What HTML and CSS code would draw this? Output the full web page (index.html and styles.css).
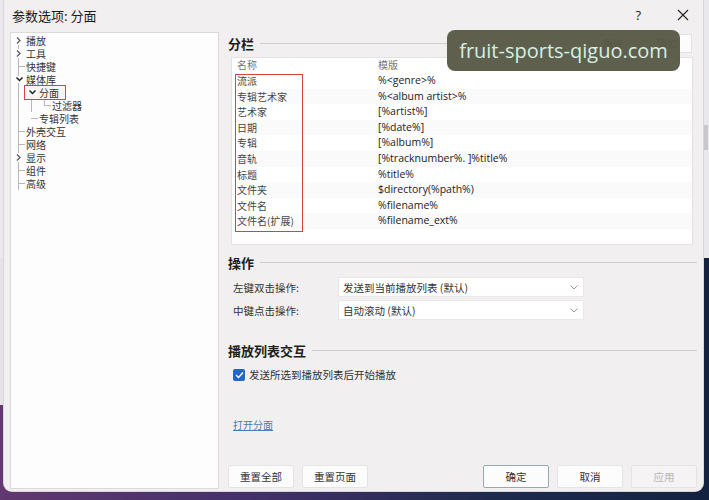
FILE: index.html
```html
<!DOCTYPE html>
<html lang="zh-CN">
<head>
  <meta charset="UTF-8" />
  <title>参数选项: 分面</title>
  <link rel="stylesheet" href="styles.css">
</head>
<body>
  <div class="window">
    <div class="titlebar">
      <span class="title">参数选项: 分面</span>
      <span class="help">?</span>
      <span class="close">
        <svg width="12" height="12" viewBox="0 0 12 12"><path d="M1 1 L11 11 M11 1 L1 11" stroke="#222" stroke-width="1.1" fill="none"/></svg>
      </span>
    </div>

    <div class="main">
      <!-- page tree -->
      <div class="tree-panel">
        <ul class="tree">
          <li><div class="item"><span class="twist"><svg class="arr" width="7" height="9" viewBox="0 0 7 9"><path d="M2 1.5 L5 4.5 L2 7.5" stroke="#555" stroke-width="1.2" fill="none"/></svg></span><span class="label">播放</span></div></li>
          <li><div class="item"><span class="twist"><svg class="arr" width="7" height="9" viewBox="0 0 7 9"><path d="M2 1.5 L5 4.5 L2 7.5" stroke="#555" stroke-width="1.2" fill="none"/></svg></span><span class="label">工具</span></div></li>
          <li><div class="item"><span class="twist leaf"></span><span class="label">快捷键</span></div></li>
          <li>
            <div class="item"><span class="twist"><svg class="arr" width="9" height="7" viewBox="0 0 9 7"><path d="M1.5 1.5 L4.5 4.5 L7.5 1.5" stroke="#222" stroke-width="1.5" fill="none"/></svg></span><span class="label">媒体库</span></div>
            <ul class="sub">
              <li>
                <div class="item"><span class="sel"><span class="twist"><svg class="arr" width="9" height="7" viewBox="0 0 9 7"><path d="M1.5 1.5 L4.5 4.5 L7.5 1.5" stroke="#222" stroke-width="1.5" fill="none"/></svg></span><span class="label">分面</span></span></div>
                <ul class="sub leafy">
                  <li><div class="item"><span class="twist leaf"></span><span class="label">过滤器</span></div></li>
                </ul>
              </li>
              <li><div class="item"><span class="twist leaf"></span><span class="label">专辑列表</span></div></li>
            </ul>
          </li>
          <li><div class="item"><span class="twist leaf"></span><span class="label">外壳交互</span></div></li>
          <li><div class="item"><span class="twist leaf"></span><span class="label">网络</span></div></li>
          <li><div class="item"><span class="twist"><svg class="arr" width="7" height="9" viewBox="0 0 7 9"><path d="M2 1.5 L5 4.5 L2 7.5" stroke="#555" stroke-width="1.2" fill="none"/></svg></span><span class="label">显示</span></div></li>
          <li><div class="item"><span class="twist leaf"></span><span class="label">组件</span></div></li>
          <li><div class="item"><span class="twist leaf"></span><span class="label">高级</span></div></li>
        </ul>
      </div>

      <div class="pane">
        <div class="group-head">
          <h2>分栏</h2>
          <span class="rule"></span>
          <button class="small-btn">删除</button>
          <button class="small-btn">添加</button>
        </div>

        <div class="columns">
          <div class="col-head"><span>名称</span><span>模版</span></div>
          <div class="col-row"><span>流派</span><span class="tpl">%&lt;genre&gt;%</span></div>
          <div class="col-row"><span>专辑艺术家</span><span class="tpl">%&lt;album artist&gt;%</span></div>
          <div class="col-row"><span>艺术家</span><span class="tpl">[%artist%]</span></div>
          <div class="col-row"><span>日期</span><span class="tpl">[%date%]</span></div>
          <div class="col-row"><span>专辑</span><span class="tpl">[%album%]</span></div>
          <div class="col-row"><span>音轨</span><span class="tpl">[%tracknumber%. ]%title%</span></div>
          <div class="col-row"><span>标题</span><span class="tpl">%title%</span></div>
          <div class="col-row"><span>文件夹</span><span class="tpl">$directory(%path%)</span></div>
          <div class="col-row"><span>文件名</span><span class="tpl">%filename%</span></div>
          <div class="col-row"><span>文件名(扩展)</span><span class="tpl">%filename_ext%</span></div>
          <div class="mark"></div>
        </div>

        <div class="group-head head-ops">
          <h2>操作</h2>
          <span class="rule"></span>
        </div>
        <div class="form-row first">
          <label>左键双击操作:</label>
          <div class="select"><span>发送到当前播放列表 (默认)</span><svg width="8" height="5" viewBox="0 0 8 5"><path d="M0.5 0.5 L4 4 L7.5 0.5" stroke="#999" stroke-width="1" fill="none"/></svg></div>
        </div>
        <div class="form-row">
          <label>中键点击操作:</label>
          <div class="select"><span>自动滚动 (默认)</span><svg width="8" height="5" viewBox="0 0 8 5"><path d="M0.5 0.5 L4 4 L7.5 0.5" stroke="#999" stroke-width="1" fill="none"/></svg></div>
        </div>

        <div class="group-head head-list">
          <h2>播放列表交互</h2>
          <span class="rule"></span>
        </div>
        <div class="check-row">
          <span class="checkbox"><svg width="9" height="8" viewBox="0 0 9 8"><path d="M1 4 L3.5 6.5 L8 1.5" stroke="#fff" stroke-width="1.4" fill="none"/></svg></span>
          <span>发送所选到播放列表后开始播放</span>
        </div>

        <a class="link" href="#">打开分面</a>

        <div class="footer">
          <button class="btn">重置全部</button>
          <button class="btn">重置页面</button>
          <span class="spacer"></span>
          <button class="btn default">确定</button>
          <button class="btn">取消</button>
          <button class="btn disabled">应用</button>
        </div>
      </div>
    </div>
  </div>

  <div class="watermark">fruit-sports-qiguo.com</div>
</body>
</html>
```

FILE: styles.css
```css
body {
  margin: 0;
  width: 709px;
  height: 500px;
  overflow: hidden;
  position: relative;
  font-family: "Noto Sans CJK SC", sans-serif;
  color: #222;
  background:
    linear-gradient(#c9c7cb, #c9c7cb) 704px 125px / 4px 25px no-repeat,
    linear-gradient(#e9e8ec, #e9e8ec) 0 0 / 709px 258px no-repeat,
    linear-gradient(#e4e2e6, #e4e2e6) 0 0 / 5px 405px no-repeat,
    linear-gradient(90deg, #61386f 0%, #44306a 35%, #1d2a4c 70%, #142242 100%);
}

.window {
  margin-left: 4px;
  width: 699px;
  height: 491px;
  background: #f1efef;
  border-radius: 0 0 8px 8px;
  box-shadow: 0 0 0 1px #d9d6d9;
  display: flex;
  flex-direction: column;
}

.titlebar {
  height: 30px;
  display: flex;
  align-items: center;
  padding: 0 14px 0 8px;
  flex-shrink: 0;
}

.title {
  font-size: 13px;
  color: #1b1b1b;
}

.help {
  margin-left: auto;
  font-family: "Open Sans", sans-serif;
  font-size: 13px;
  color: #222;
}

.close {
  margin-left: 36px;
  display: flex;
}

.main {
  flex: 1;
  display: flex;
  gap: 9px;
  padding: 2px 6px 2px 6px;
  min-height: 0;
}

/* tree */
.tree-panel {
  width: 209px;
  box-sizing: border-box;
  background: #fefdfe;
  border: 1px solid #dcd9dc;
  padding: 1px 0 0 3px;
}

.tree,
.sub {
  list-style: none;
  margin: 0;
  padding: 0;
  font-size: 10px;
  color: #333;
}

.tree {
  background: linear-gradient(#b9b7ba, #b9b7ba) 4px 6px / 1px 152px no-repeat;
}

.sub {
  padding-left: 13px;
  background: linear-gradient(#b9b7ba, #b9b7ba) 17px 6px / 1px 20px no-repeat;
}

.sub.leafy {
  background: linear-gradient(#b9b7ba, #b9b7ba) 17px 0 / 1px 7px no-repeat;
}

.item {
  height: 13px;
  display: flex;
  align-items: center;
  white-space: nowrap;
}

.label {
  line-height: 11px;
  height: 11px;
}

.twist {
  width: 12px;
  height: 13px;
  flex-shrink: 0;
  position: relative;
  display: flex;
  align-items: center;
}

.twist .arr {
  background: #fefdfe;
  margin-left: 1px;
}

.twist.leaf::before {
  content: "";
  position: absolute;
  left: 4px;
  top: 6px;
  width: 7px;
  border-top: 1px solid #b9b7ba;
}

.sel {
  display: inline-flex;
  align-items: center;
  height: 13px;
  margin-left: -2px;
  padding: 0 6px 0 2px;
  background: #fbf4f5;
  outline: 1.5px solid #d8443f;
}

/* right pane */
.pane {
  width: 469px;
  display: flex;
  flex-direction: column;
}

.group-head {
  height: 22px;
  display: flex;
  align-items: center;
  flex-shrink: 0;
}

.group-head h2 {
  margin: 0;
  font-size: 13px;
  font-weight: bold;
  color: #1e1e1e;
}

.rule {
  flex: 1;
  height: 1px;
  background: #cfcdd0;
  margin: 0 0 0 6px;
}

.small-btn {
  width: 50px;
  height: 19px;
  margin-left: 4px;
  background: #fdfcfd;
  border: 1px solid #e3e1e3;
  font-family: inherit;
  font-size: 10px;
  color: #666;
  padding: 0;
}

.small-btn:last-child {
  margin-right: 5px;
}

.columns {
  position: relative;
  margin: 3px 4px 0 3px;
  height: 188px;
  box-sizing: border-box;
  background: #fff;
  border: 1px solid #e3e1e3;
  padding-left: 5px;
  flex-shrink: 0;
}

.col-head,
.col-row {
  display: grid;
  grid-template-columns: 141px 1fr;
  font-size: 10px;
  white-space: nowrap;
}

.col-head {
  height: 15px;
  line-height: 13px;
  color: #777;
}

.col-row {
  height: 15.6px;
  line-height: 15.6px;
  color: #444;
}

.col-row:nth-child(odd) {
  background: #fbfafb;
}

.tpl {
  font-family: "Open Sans", sans-serif;
  font-size: 10.5px;
  color: #222;
}

.mark {
  position: absolute;
  left: 3px;
  top: 16px;
  width: 68px;
  height: 158px;
  box-sizing: border-box;
  border: 1.5px solid #d6423d;
}

.head-ops {
  margin-top: 9px;
  height: 16px;
}

.head-list {
  margin-top: 22px;
  height: 16px;
}

.form-row {
  display: flex;
  align-items: center;
  height: 20px;
  margin-top: 3px;
  font-size: 10.5px;
  color: #333;
}

.form-row.first {
  margin-top: 7px;
}

.form-row label {
  width: 110px;
  flex-shrink: 0;
  padding-left: 5px;
  box-sizing: border-box;
}

.select {
  width: 246px;
  height: 20px;
  box-sizing: border-box;
  background: #fff;
  border: 1px solid #e9e7e9;
  display: flex;
  align-items: center;
  justify-content: space-between;
  padding: 0 5px 0 4px;
  font-size: 10.5px;
  color: #333;
}

.check-row {
  margin-top: 10px;
  padding-left: 5px;
  height: 13px;
  display: flex;
  align-items: center;
  gap: 4px;
  font-size: 10.5px;
  color: #333;
}

.checkbox {
  width: 12px;
  height: 12px;
  border-radius: 2px;
  background: #2267c8;
  display: flex;
  align-items: center;
  justify-content: center;
}

.link {
  margin-top: 37px;
  margin-left: 5px;
  font-size: 10px;
  line-height: 13px;
  color: #4a7db0;
  align-self: flex-start;
}

.footer {
  margin-top: auto;
  margin-bottom: 1px;
  display: flex;
  gap: 8px;
}

.spacer {
  flex: 1;
}

.btn {
  width: 66px;
  height: 23px;
  padding: 0;
  background: #fdfcfd;
  border: 1px solid #e6e3e6;
  border-radius: 2px;
  font-family: inherit;
  font-size: 10.5px;
  color: #333;
}

.btn.default {
  border-color: #9aa6b4;
}

.btn.disabled {
  background: #f5f3f4;
  color: #b8b6b8;
}

.watermark {
  position: absolute;
  left: 447px;
  top: 30px;
  width: 233px;
  height: 41px;
  border-radius: 8px;
  background: rgba(86, 86, 68, 0.95);
  color: #d6efe2;
  font-family: "Open Sans", sans-serif;
  font-size: 20px;
  line-height: 41px;
  text-align: center;
}
```
